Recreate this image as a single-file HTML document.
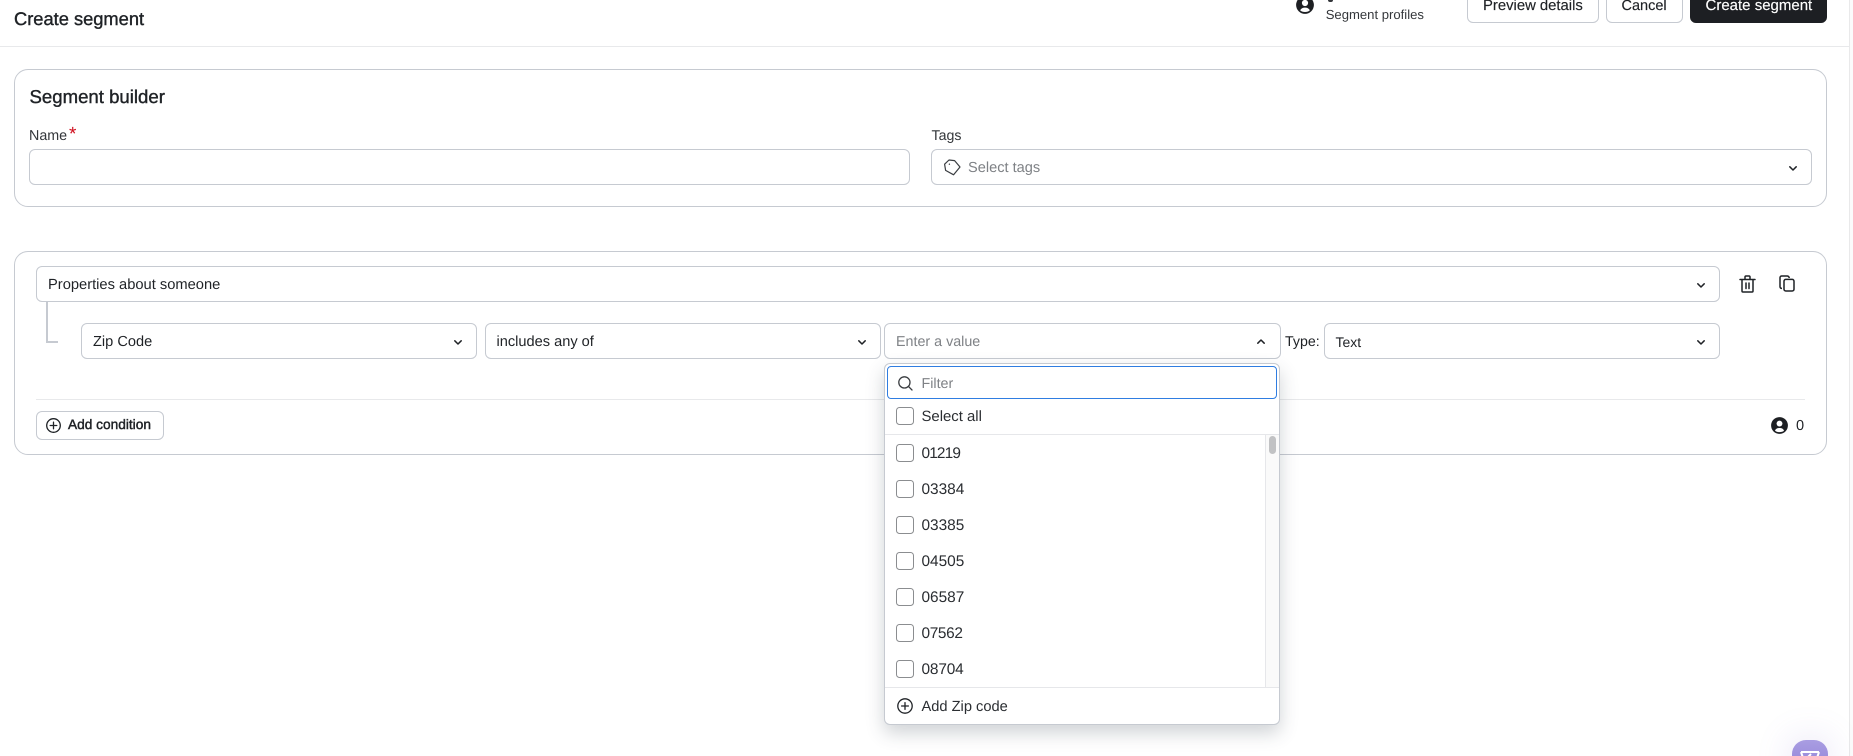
<!DOCTYPE html>
<html><head><meta charset="utf-8"><title>Create segment</title>
<style>
html,body{margin:0;padding:0;width:1853px;height:756px;overflow:hidden;background:#fff}
body{position:relative;font-family:"Liberation Sans",sans-serif;color:#1f2226;text-rendering:geometricPrecision;-webkit-font-smoothing:antialiased}
.t{position:absolute;line-height:20px;height:20px;white-space:nowrap;font-size:14.6px}
.b{position:absolute;box-sizing:border-box;background:#fff;border:1px solid #c6cad1;border-radius:6px}
.card{border-radius:14px}
.ph{color:#7f8286}
.m{-webkit-text-stroke:.4px currentColor}
.cb{position:absolute;box-sizing:border-box;left:896px;width:18px;height:18px;background:#fff;border:1px solid #8b8d90;border-radius:3.5px}
svg{position:absolute;overflow:visible}
.chev{width:8px;height:5px;fill:none;stroke:#1f2226;stroke-width:1.5;stroke-linecap:round;stroke-linejoin:round}
.ln{position:absolute}
.d{font-size:15.4px;left:921.5px}
</style></head><body>

<!-- scrollbar strip -->
<div class="ln" style="left:1849px;top:0;width:4px;height:756px;background:#fbfbfb;border-left:1px solid #e9e9ea;box-sizing:border-box"></div>

<!-- header -->
<div class="ln" style="left:0;top:46px;width:1849px;height:1px;background:#e8e9eb"></div>
<div class="t m" style="left:14px;top:9px;font-size:18.3px">Create segment</div>

<svg style="left:1295.5px;top:-4.5px" width="18" height="18" viewBox="0 0 18 18"><circle cx="9" cy="9" r="8.9" fill="#1d1f23"/><circle cx="9" cy="7" r="3.1" fill="#fff"/><path d="M4.2 14.4C5.2 12.2 6.9 11.6 9 11.6s3.8 .6 4.8 2.8C12.6 15.6 11 16 9 16s-3.6-.4-4.8-1.6z" fill="#fff"/></svg>
<div class="ln" style="left:1328px;top:0;width:5px;height:1.5px;background:#33363a;border-radius:0 0 2px 2px"></div>
<div class="t" style="left:1325.7px;top:4.5px;font-size:13.1px;color:#33363a">Segment profiles</div>

<div class="b" style="left:1467px;top:-14px;width:131.5px;height:37px"></div>
<div class="t m" style="left:1483px;top:-4.5px;font-size:14.85px;-webkit-text-stroke-width:.15px">Preview details</div>
<div class="b" style="left:1606px;top:-14px;width:76.5px;height:37px"></div>
<div class="t m" style="left:1621.5px;top:-4.5px;font-size:14.5px;-webkit-text-stroke-width:.15px">Cancel</div>
<div class="b" style="left:1690px;top:-14px;width:137px;height:37px;background:#1d1f23;border-color:#1d1f23"></div>
<div class="t m" style="left:1705.5px;top:-4.5px;font-size:15px;color:#fff;-webkit-text-stroke-width:.15px">Create segment</div>

<!-- card 1 -->
<div class="b card" style="left:14px;top:69px;width:1813px;height:138px"></div>
<div class="t m" style="left:29.5px;top:87px;font-size:18.6px">Segment builder</div>
<div class="t" style="left:29px;top:125.5px;font-size:14.3px;color:#33363a">Name</div>
<div class="t" style="left:69px;top:127px;font-size:19px;color:#d0101f;line-height:16px;height:16px">*</div>
<div class="b" style="left:29px;top:149px;width:881px;height:36px"></div>
<div class="t" style="left:931.5px;top:125.5px;font-size:14.2px;color:#33363a">Tags</div>
<div class="b" style="left:931px;top:149px;width:880.5px;height:36px"></div>
<svg style="left:943px;top:158.5px" width="18" height="17" viewBox="0 0 18 17" fill="none" stroke="#3a3d41" stroke-width="1.2" stroke-linejoin="round"><path d="M1.6 5.2 6 1 11.6 1.6 17 8 10.6 15.8 2.6 11.4z"/><circle cx="6.4" cy="5.2" r=".7" fill="#3a3d41" stroke="none"/></svg>
<div class="t ph" style="left:968px;top:157.5px">Select tags</div>
<svg class="chev" style="left:1789px;top:165.5px" viewBox="0 0 8 5"><path d="M.8.8 4 4 7.2.8"/></svg>

<!-- card 2 -->
<div class="b card" style="left:14px;top:251px;width:1813px;height:204px"></div>
<div class="b" style="left:36px;top:266px;width:1683.5px;height:36px"></div>
<div class="t" style="left:48px;top:274.5px;font-size:14.7px">Properties about someone</div>
<svg class="chev" style="left:1697px;top:282.5px" viewBox="0 0 8 5"><path d="M.8.8 4 4 7.2.8"/></svg>

<svg style="left:1738.5px;top:275px" width="17" height="18" viewBox="0 0 17 18" fill="none" stroke="#1f2226" stroke-width="1.5" stroke-linejoin="round" stroke-linecap="round"><path d="M1 4.5h15M3 4.5V16a1 1 0 0 0 1 1h9a1 1 0 0 0 1-1V4.5M6 4.5V2a1 1 0 0 1 1-1h3a1 1 0 0 1 1 1v2.5M7 8v5.5M10 8v5.5"/></svg>
<svg style="left:1779px;top:275px" width="16" height="17" viewBox="0 0 16 17" fill="none" stroke="#1f2226" stroke-width="1.5" stroke-linejoin="round"><path d="M3 13.4H2.6A1.6 1.6 0 0 1 1 11.8V2.6A1.6 1.6 0 0 1 2.6 1h5.8A2 2 0 0 1 10.2 3"/><rect x="5" y="4.4" width="10" height="11.6" rx="1.8"/></svg>

<!-- connector -->
<div class="ln" style="left:46px;top:302px;width:2px;height:40px;background:#c6cad1"></div>
<div class="ln" style="left:46px;top:340.5px;width:12px;height:2px;background:#c6cad1"></div>

<div class="b" style="left:81px;top:323px;width:395.5px;height:36px"></div>
<div class="t" style="left:93px;top:332px">Zip Code</div>
<svg class="chev" style="left:454px;top:339.5px" viewBox="0 0 8 5"><path d="M.8.8 4 4 7.2.8"/></svg>

<div class="b" style="left:485px;top:323px;width:395.5px;height:36px"></div>
<div class="t" style="left:496.5px;top:332px">includes any of</div>
<svg class="chev" style="left:858px;top:339.5px" viewBox="0 0 8 5"><path d="M.8.8 4 4 7.2.8"/></svg>

<div class="b" style="left:884px;top:323px;width:396.5px;height:36px"></div>
<div class="t ph" style="left:896px;top:332px;font-size:14.3px">Enter a value</div>
<svg class="chev" style="left:1257px;top:338.5px" viewBox="0 0 8 5"><path d="M.8 4.2 4 1 7.2 4.2"/></svg>

<div class="t" style="left:1285px;top:331.5px;font-size:14.2px">Type:</div>
<div class="b" style="left:1324px;top:323px;width:395.5px;height:36px"></div>
<div class="t" style="left:1335.5px;top:332px;font-size:14px">Text</div>
<svg class="chev" style="left:1697px;top:339.5px" viewBox="0 0 8 5"><path d="M.8.8 4 4 7.2.8"/></svg>

<div class="ln" style="left:36px;top:399px;width:1769px;height:1px;background:#e8e9eb"></div>
<div class="b" style="left:36px;top:411px;width:128px;height:29px"></div>
<svg style="left:45.5px;top:417.5px" width="15" height="15" viewBox="0 0 15 15" fill="none" stroke="#1f2226" stroke-width="1.3" stroke-linecap="round"><circle cx="7.5" cy="7.5" r="6.8"/><path d="M7.5 4.2v6.6M4.2 7.5h6.6"/></svg>
<div class="t m" style="left:68px;top:415px;font-size:13.7px;-webkit-text-stroke-width:.45px">Add condition</div>

<svg style="left:1771px;top:417px" width="17" height="17" viewBox="0 0 18 18"><circle cx="9" cy="9" r="8.9" fill="#1d1f23"/><circle cx="9" cy="7" r="3.1" fill="#fff"/><path d="M4.2 14.4C5.2 12.2 6.9 11.6 9 11.6s3.8 .6 4.8 2.8C12.6 15.6 11 16 9 16s-3.6-.4-4.8-1.6z" fill="#fff"/></svg>
<div class="t" style="left:1796px;top:415.5px;font-size:14.6px">0</div>

<!-- dropdown -->
<div class="b" style="left:884px;top:363px;width:395.5px;height:362px;box-shadow:0 8px 18px rgba(60,70,85,.24);border-color:#c6cad1"></div>
<div class="b" style="left:887px;top:366px;width:390px;height:33px;border-color:#2f7de1;border-radius:4px"></div>
<svg style="left:897.5px;top:376px" width="15" height="15" viewBox="0 0 15 15" fill="none" stroke="#3a3d41" stroke-width="1.3" stroke-linecap="round"><circle cx="6.4" cy="6.4" r="5.6"/><path d="M10.6 10.6l3.4 3.4"/></svg>
<div class="t ph" style="left:921.5px;top:374px;font-size:14.3px">Filter</div>
<div class="cb" style="top:407px"></div>
<div class="t" style="left:921.5px;top:406.8px;font-size:14.9px;color:#2b2e32">Select all</div>
<div class="ln" style="left:885px;top:434px;width:393.5px;height:1px;background:#e6e7ea"></div>

<div class="ln" style="left:1264.5px;top:435px;width:14px;height:252px;background:#fafafa;border-left:1px solid #e6e7ea;box-sizing:border-box"></div>
<div class="ln" style="left:1268.5px;top:436px;width:7.5px;height:18px;background:#c1c2c4;border-radius:4px"></div>

<div class="cb" style="top:444px"></div><div class="t d" style="top:444px;letter-spacing:-.85px;color:#2b2e32">01219</div>
<div class="cb" style="top:480px"></div><div class="t d" style="top:480px;color:#2b2e32">03384</div>
<div class="cb" style="top:516px"></div><div class="t d" style="top:516px;color:#2b2e32">03385</div>
<div class="cb" style="top:552px"></div><div class="t d" style="top:552px;color:#2b2e32">04505</div>
<div class="cb" style="top:588px"></div><div class="t d" style="top:588px;color:#2b2e32">06587</div>
<div class="cb" style="top:624px"></div><div class="t d" style="top:624px;letter-spacing:-.35px;color:#2b2e32">07562</div>
<div class="cb" style="top:660px"></div><div class="t d" style="top:660px;letter-spacing:-.15px;color:#2b2e32">08704</div>

<div class="ln" style="left:885px;top:687px;width:393.5px;height:1px;background:#e6e7ea"></div>
<svg style="left:896.5px;top:697.5px" width="16" height="16" viewBox="0 0 16 16" fill="none" stroke="#1f2226" stroke-width="1.3" stroke-linecap="round"><circle cx="8" cy="8" r="7.2"/><path d="M8 4.6v6.8M4.6 8h6.8"/></svg>
<div class="t" style="left:921.5px;top:696.8px;font-size:14.65px;color:#2b2e32">Add Zip code</div>

<!-- chat widget -->
<div class="ln" style="left:1792px;top:740px;width:36px;height:36px;border-radius:14px;background:linear-gradient(#a99de2,#8f7fd6);box-shadow:0 0 36px rgba(130,110,210,.22)"></div>
<svg style="left:1800px;top:751px" width="20" height="6" viewBox="0 0 20 6" fill="none" stroke="#fff" stroke-width="2"><path d="M1 1h18M1 1l2 6M19 1l-2 6M11 3l-3 3"/></svg>
</body></html>
